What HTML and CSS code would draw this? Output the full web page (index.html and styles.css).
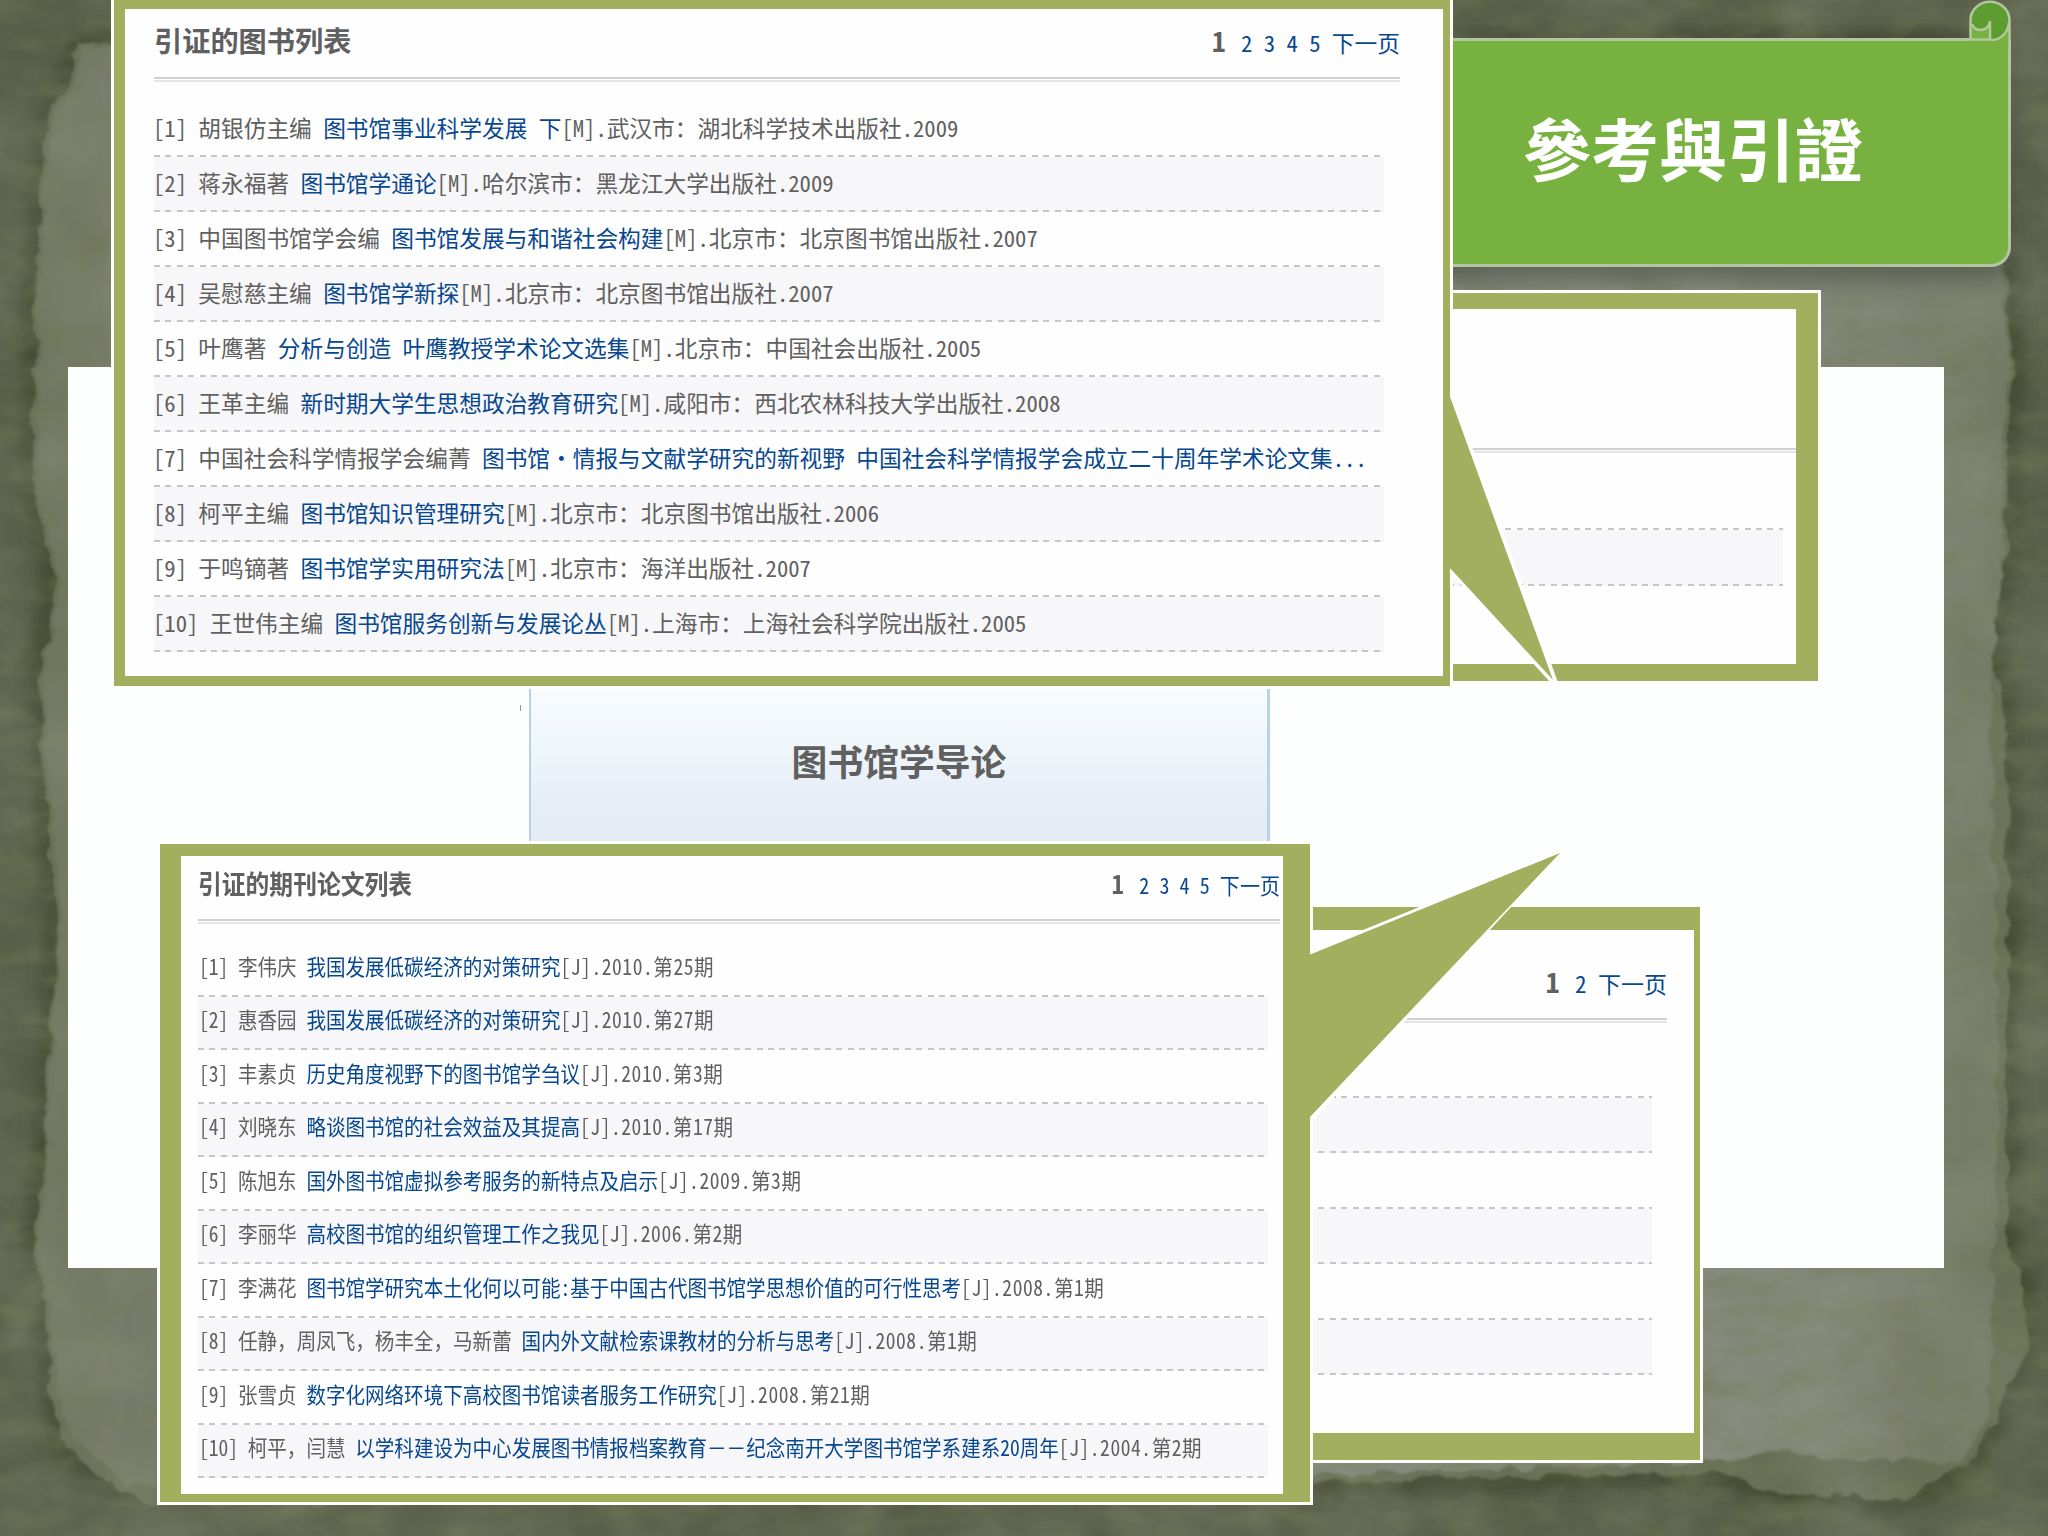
FILE: index.html
```html
<!DOCTYPE html>
<html lang="zh">
<head>
    <meta charset="UTF-8">
    <meta name="viewport" content="width=device-width, initial-scale=1.0">
    <title>參考與引證</title>
    <link rel="stylesheet" href="styles.css">
</head>
<body>
    <div class="slide">
        <!-- Paper background -->
        <svg class="paper" viewBox="0 0 2048 1536" width="2048" height="1536">
            <defs>
                <filter id="grain" x="0" y="0" width="100%" height="100%">
                    <feTurbulence type="fractalNoise" baseFrequency="0.018 0.04" numOctaves="4" seed="4"/>
                    <feColorMatrix values="0 0 0 0 0.17  0 0 0 0 0.19  0 0 0 0 0.09  1.1 0 0 0 -0.42"/>
                </filter>
                <filter id="mottle" x="0" y="0" width="100%" height="100%">
                    <feTurbulence type="fractalNoise" baseFrequency="0.009" numOctaves="4" seed="9"/>
                    <feColorMatrix values="0 0 0 0 0.35  0 0 0 0 0.37  0 0 0 0 0.3  0.5 0 0 0 -0.17"/>
                </filter>
                <filter id="torn" x="-5%" y="-5%" width="110%" height="110%">
                    <feTurbulence type="fractalNoise" baseFrequency="0.03" numOctaves="5" seed="2" result="n"/>
                    <feDisplacementMap in="SourceGraphic" in2="n" scale="18" xChannelSelector="R" yChannelSelector="G"/>
                    <feGaussianBlur stdDeviation="1.2"/>
                </filter>
                <filter id="soft"><feGaussianBlur stdDeviation="8"/></filter>
                <linearGradient id="sheet" x1="0" y1="0" x2="1" y2="0">
                    <stop offset="0" stop-color="#70755f"/>
                    <stop offset="0.1" stop-color="#7b8073"/>
                    <stop offset="0.85" stop-color="#868a7d"/>
                    <stop offset="1" stop-color="#747965"/>
                </linearGradient>
            </defs>
            <rect width="2048" height="1536" fill="#575d47"/>
            <path d="M83 43L1960 45L2005 270L2016 360L2008 420L2008 550L1995 600L1990 650L2003 690L2008 900L2008 1250L2024 1290L2028 1350L2010 1380L1995 1420L1965 1465L1925 1490L1890 1502L1780 1492L1710 1474L1550 1476L1300 1484L160 1484L120 1488L65 1450L52 1400L45 1300L33 1250L42 1180L53 1000L55 900L42 750L40 655L50 640L52 560L42 520L33 480L35 290L40 200L45 130Z" fill="none" stroke="#3a4127" stroke-opacity="0.7" stroke-width="24" filter="url(#soft)"/>
            <g filter="url(#torn)">
                <path d="M83 43L1960 45L2005 270L2016 360L2008 420L2008 550L1995 600L1990 650L2003 690L2008 900L2008 1250L2024 1290L2028 1350L2010 1380L1995 1420L1965 1465L1925 1490L1890 1502L1780 1492L1710 1474L1550 1476L1300 1484L420 1484L400 1506L340 1502L160 1504L120 1488L65 1450L52 1400L45 1300L33 1250L42 1180L53 1000L55 900L42 750L40 655L50 640L52 560L42 520L33 480L35 290L40 200L45 130Z" fill="#686e55"/>
                <path d="M87 46L1950 55L2000 270L2012 360L2003 420L2003 550L1990 700L1998 1000L1996 1200L1990 1330L1985 1420L1960 1462L1850 1458L1750 1454L1700 1462L1300 1476L130 1482L72 1445L57 1390L50 1300L38 1250L50 1100L57 1000L59 880L46 750L45 655L55 630L56 560L46 515L38 480L39 290L45 200L50 130Z" fill="url(#sheet)"/>
            </g>
            <rect width="2048" height="1536" filter="url(#grain)"/>
            <rect width="2048" height="1536" filter="url(#mottle)"/>
        </svg>

        <!-- Title banner -->
        <div class="banner-shadow"></div>
        <header class="banner">
            <h1>參考與引證</h1>
        </header>
        <svg class="curl" viewBox="0 0 46 46" width="46" height="46">
            <path d="M3.500 42V20A19 18 0 0 1 42 20V46H3.500Z" fill="#77b13f"/>
            <path d="M4.500 22A18.500 18.500 0 0 1 41.500 20C41.500 33 34 40 24 40V21C22 29 18 31 13 31C8 31 4.500 27 4.500 22Z" fill="#5d9c2e"/>
            <path d="M0 39.500H24M3.500 40V20A19.250 18 0 0 1 42.500 20V46M24 40C34 40 41 33 42 22M5 24C7 32 21 33 23 21V40" fill="none" stroke="#b4c5a2" stroke-width="2.500"/>
        </svg>

        <main class="board">
            <div class="book-title">图书馆学导论</div>
            <span class="tick"></span>
        </main>

        <!-- Panels at the back -->
        <section class="panel back-top">
            <div class="rule"></div>
            <ul class="blank-list">
                <li></li><li></li>
            </ul>
        </section>

        <section class="panel back-bottom">
            <div class="panel-head">
                <span></span>
                <nav class="pager"><b>1</b> <a>2</a> <a>下一页</a></nav>
            </div>
            <div class="rule"></div>
            <ul class="blank-list">
                <li></li><li></li><li></li><li></li><li></li><li></li>
            </ul>
        </section>

        <!-- Cited books -->
        <section class="panel books">
            <div class="panel-head">
                <h2>引证的图书列表</h2>
                <nav class="pager"><b>1</b> <a>2</a> <a>3</a> <a>4</a> <a>5</a> <a>下一页</a></nav>
            </div>
            <div class="rule"></div>
            <ul class="cite-list">
                <li><p>[1] 胡银仿主编 <a>图书馆事业科学发展 下</a>[M].武汉市：湖北科学技术出版社.2009</p></li>
                <li><p>[2] 蒋永福著 <a>图书馆学通论</a>[M].哈尔滨市：黑龙江大学出版社.2009</p></li>
                <li><p>[3] 中国图书馆学会编 <a>图书馆发展与和谐社会构建</a>[M].北京市：北京图书馆出版社.2007</p></li>
                <li><p>[4] 吴慰慈主编 <a>图书馆学新探</a>[M].北京市：北京图书馆出版社.2007</p></li>
                <li><p>[5] 叶鹰著 <a>分析与创造 叶鹰教授学术论文选集</a>[M].北京市：中国社会出版社.2005</p></li>
                <li><p>[6] 王革主编 <a>新时期大学生思想政治教育研究</a>[M].咸阳市：西北农林科技大学出版社.2008</p></li>
                <li><p>[7] 中国社会科学情报学会编菁 <a>图书馆<span class="dot">·</span>情报与文献学研究的新视野 中国社会科学情报学会成立二十周年学术论文集...</a></p></li>
                <li><p>[8] 柯平主编 <a>图书馆知识管理研究</a>[M].北京市：北京图书馆出版社.2006</p></li>
                <li><p>[9] 于鸣镝著 <a>图书馆学实用研究法</a>[M].北京市：海洋出版社.2007</p></li>
                <li><p>[10] 王世伟主编 <a>图书馆服务创新与发展论丛</a>[M].上海市：上海社会科学院出版社.2005</p></li>
            </ul>
        </section>

        <!-- Cited journal papers -->
        <section class="panel papers">
            <div class="panel-head">
                <h2>引证的期刊论文列表</h2>
                <nav class="pager"><b>1</b> <a>2</a> <a>3</a> <a>4</a> <a>5</a> <a>下一页</a></nav>
            </div>
            <div class="rule"></div>
            <ul class="cite-list">
                <li><p>[1] 李伟庆 <a>我国发展低碳经济的对策研究</a><span class="src">[J].2010.第25期</span></p></li>
                <li><p>[2] 惠香园 <a>我国发展低碳经济的对策研究</a><span class="src">[J].2010.第27期</span></p></li>
                <li><p>[3] 丰素贞 <a>历史角度视野下的图书馆学刍议</a><span class="src">[J].2010.第3期</span></p></li>
                <li><p>[4] 刘晓东 <a>略谈图书馆的社会效益及其提高</a><span class="src">[J].2010.第17期</span></p></li>
                <li><p>[5] 陈旭东 <a>国外图书馆虚拟参考服务的新特点及启示</a><span class="src">[J].2009.第3期</span></p></li>
                <li><p>[6] 李丽华 <a>高校图书馆的组织管理工作之我见</a><span class="src">[J].2006.第2期</span></p></li>
                <li><p>[7] 李满花 <a>图书馆学研究本土化何以可能:基于中国古代图书馆学思想价值的可行性思考</a><span class="src">[J].2008.第1期</span></p></li>
                <li><p>[8] 任静<i>，</i>周凤飞<i>，</i>杨丰全<i>，</i>马新蕾 <a>国内外文献检索课教材的分析与思考</a><span class="src">[J].2008.第1期</span></p></li>
                <li><p>[9] 张雪贞 <a>数字化网络环境下高校图书馆读者服务工作研究</a><span class="src">[J].2008.第21期</span></p></li>
                <li><p>[10] 柯平<i>，</i>闫慧 <a>以学科建设为中心发展图书情报档案教育<i>－－</i>纪念南开大学图书馆学系建系20周年</a><span class="src">[J].2004.第2期</span></p></li>
            </ul>
        </section>

        <!-- Callout tails -->
        <svg class="tails" viewBox="0 0 2048 1536" width="2048" height="1536">
            <path d="M1451.500 399L1555 683L1451.500 570" class="tail-line"/>
            <path d="M1449 394L1553 680L1449 567" class="tail-fill"/>
            <path d="M1312 954L1556 854.500L1312 1116.500" class="tail-line"/>
            <path d="M1309 955L1560 853L1309 1118" class="tail-fill"/>
        </svg>
    </div>
</body>
</html>
```
FILE: styles.css
```css
* {
    margin: 0;
    padding: 0;
    box-sizing: border-box;
}

body {
    background-color: #555b44;
    font-family: "Noto Sans CJK SC", sans-serif;
    color: #606060;
    overflow: hidden;
}

.slide {
    position: relative;
    width: 2048px;
    height: 1536px;
    overflow: hidden;
}

.paper,
.tails {
    position: absolute;
    top: 0;
    left: 0;
}

.tail-fill {
    fill: #a1af5f;
}

.tail-line {
    fill: none;
    stroke: #fff;
    stroke-width: 6;
}

/* Banner */
.banner-shadow {
    position: absolute;
    left: 1300px;
    top: 50px;
    width: 704px;
    height: 214px;
    border-radius: 20px;
    box-shadow: 0 10px 24px 6px rgba(70, 75, 68, 0.6);
}

.banner {
    position: absolute;
    left: 1400px;
    top: 38px;
    width: 611px;
    height: 229px;
    padding: 0 0 11px 123px;
    display: flex;
    align-items: center;
    background-color: #77b13f;
    border: 3px solid #b4c5a2;
    border-left: none;
    border-radius: 0 0 20px 0;
}

.banner h1 {
    font-family: "Noto Sans CJK TC", sans-serif;
    font-size: 68px;
    font-weight: 700;
    line-height: 1;
    color: #fff;
}

.curl {
    position: absolute;
    left: 1967px;
    top: 0;
}

/* White sheet with the book title */
.board {
    position: absolute;
    left: 68px;
    top: 367px;
    width: 1876px;
    height: 901px;
    padding: 321px 0 0 461px;
    background-color: #fdfefe;
}

.book-title {
    width: 741px;
    height: 153px;
    padding-bottom: 9px;
    display: flex;
    align-items: center;
    justify-content: center;
    background: linear-gradient(#f9fbfe, #eff7fb 35%, #e7eef8 70%, #e4ebf4);
    border-left: 2px solid #b9cfe5;
    border-right: 3px solid #b9d3e6;
    font-size: 35.8px;
    font-weight: 700;
}

.tick {
    position: absolute;
    left: 452px;
    top: 338px;
    width: 1px;
    height: 6px;
    background-color: #999;
}

/* Framed panels */
.panel {
    position: absolute;
    background-color: #fefefe;
    border: solid #a1af5f;
    outline: 3px solid #fefffa;
}

.panel-head {
    display: flex;
    justify-content: space-between;
    align-items: center;
    padding-bottom: 5px;
}

.panel h2 {
    font-weight: 700;
    line-height: 1;
    white-space: nowrap;
}

.pager {
    font-feature-settings: "hwid";
    white-space: nowrap;
    line-height: 1;
}

.pager b {
    margin-right: 4px;
    font-size: 1.2em;
    line-height: 1;
}

a {
    color: #07478f;
}

.rule {
    height: 5px;
    border-top: 2px solid #cfd0d3;
    border-bottom: 2px solid #e3e4e6;
}

ul {
    list-style: none;
}

.cite-list li,
.blank-list li {
    display: flex;
    align-items: center;
    background: repeating-linear-gradient(90deg, #c6c6c8 0 6px, transparent 6px 11.4px) bottom / 100% 2px no-repeat;
}

.cite-list li:nth-child(even),
.blank-list li:nth-child(even) {
    background-color: #f7f6f8;
}

.cite-list p {
    font-feature-settings: "hwid";
    line-height: 1;
    white-space: pre;
    transform-origin: left center;
}

/* full-width punctuation */
.cite-list i {
    font-style: normal;
    font-feature-settings: normal;
}

.dot {
    display: inline-block;
    width: 1em;
    text-align: center;
}

.books {
    left: 114px;
    top: 0;
    width: 1336px;
    height: 686px;
    padding: 0 43px 0 29px;
    border-width: 9px 7px 10px 11px;
}

.books .panel-head {
    height: 68px;
}

.books h2 {
    font-size: 28.2px;
}

.books .pager {
    font-size: 22.72px;
}

.books .cite-list {
    margin-top: 20px;
    width: 1230px;
}

.books li {
    height: 55px;
    padding-bottom: 3px;
}

.books p {
    margin-left: -1px;
    font-size: 22.7px;
}

.papers {
    left: 160px;
    top: 844px;
    width: 1150px;
    height: 658px;
    padding: 0 3px 0 17px;
    border-width: 12px 27px 8px 21px;
}

.papers .panel-head {
    height: 63px;
    padding-bottom: 10px;
}

.papers h2 {
    font-size: 26px;
    transform: scaleX(0.915);
    transform-origin: left center;
}

.papers .pager {
    font-size: 21.6px;
    transform: scaleX(0.93);
    transform-origin: right center;
}

.papers .pager b {
    margin-right: 6px;
}

.papers .cite-list {
    margin-top: 19px;
    width: 1070px;
}

.papers li {
    height: 53.5px;
    padding-bottom: 8px;
}

.papers p {
    padding-left: 1px;
    font-size: 21.6px;
    transform: scaleX(0.905);
}

.src {
    letter-spacing: 0.6px;
}

.back-top {
    left: 1300px;
    top: 293px;
    width: 518px;
    height: 388px;
    padding-top: 139px;
    border-width: 16px 22px 17px 0;
}

.back-top .blank-list {
    margin-top: 20px;
    width: 483px;
}

.back-top li {
    height: 56.5px;
}

.back-bottom {
    left: 1250px;
    top: 907px;
    width: 450px;
    height: 553px;
    padding: 0 27px 0 0;
    border-width: 23px 6px 27px 0;
}

.back-bottom .panel-head {
    height: 88px;
    padding-top: 20px;
}

.back-bottom .pager {
    font-size: 23px;
}

.back-bottom .blank-list {
    margin-top: 19px;
    width: 402px;
}

.back-bottom li {
    height: 55.5px;
}
```
